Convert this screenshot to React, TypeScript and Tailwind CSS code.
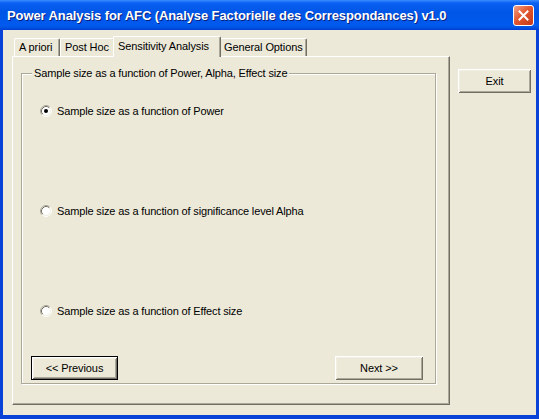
import React from 'react';

const font = "font-['Tahoma','Liberation_Sans',sans-serif]";
const raised =
  'shadow-[inset_1px_1px_0_#fff,inset_-1px_-1px_0_#716f64,inset_2px_2px_0_#f1efe2,inset_-2px_-2px_0_#aca899]';

function Radio({ checked }: { checked?: boolean }) {
  return (
    <svg width="12" height="12" viewBox="0 0 12 12" className="shrink-0">
      <circle cx="6" cy="6" r="5" fill="#fff" />
      <path d="M2.11 9.89 A5.5 5.5 0 0 1 9.89 2.11" fill="none" stroke="#aca899" />
      <path d="M9.89 2.11 A5.5 5.5 0 0 1 2.11 9.89" fill="none" stroke="#fff" />
      <path d="M2.82 9.18 A4.5 4.5 0 0 1 9.18 2.82" fill="none" stroke="#716f64" />
      <path d="M9.18 2.82 A4.5 4.5 0 0 1 2.82 9.18" fill="none" stroke="#f1efe2" />
      {checked && <circle cx="6" cy="6" r="2" fill="#000" />}
    </svg>
  );
}

function Button({ label, isDefault, className }: { label: string; isDefault?: boolean; className: string }) {
  return (
    <div className={`${className} ${isDefault ? 'border border-black' : ''} bg-[#ece9d8]`}>
      <div className={`h-full w-full flex items-center justify-center text-[11px] tracking-[-0.1px] text-black ${raised}`}>
        {label}
      </div>
    </div>
  );
}

function Tab({ label, width, selected }: { label: string; width: string; selected?: boolean }) {
  return (
    <div
      className={`${width} ${
        selected
          ? 'h-[21px] -mb-px -mx-[2px] relative z-10 pt-[2px]'
          : 'h-[18px] pt-[1px]'
      } bg-[#ece9d8] border-t border-l border-white border-r border-r-[#716f64] rounded-t-[2px] shadow-[inset_-1px_0_0_#aca899] pl-[4px] text-[11px] tracking-[-0.1px] leading-[15px] whitespace-nowrap`}
    >
      {label}
    </div>
  );
}

export default function App() {
  return (
    <div className={`w-[539px] h-[419px] flex flex-col bg-[#0842d6] ${font} text-black`}>
      <div className="h-[30px] shrink-0 flex items-center justify-between pl-[7px] pr-[5px] bg-[linear-gradient(to_bottom,#3a8cff_0%,#0a60f2_10%,#0056e6_40%,#005aee_85%,#0052e0_92%,#003dd7_100%)]">
        <span className="text-white font-bold text-[13px] font-['Trebuchet_MS','Liberation_Sans',sans-serif] [text-shadow:1px_1px_0_#0a1f7a] tracking-[-0.1px] mt-[1px]">
          Power Analysis for AFC (Analyse Factorielle des Correspondances) v1.0
        </span>
        <div className="w-[21px] h-[21px] rounded-[3px] border border-white bg-[linear-gradient(135deg,#f0a38a_0%,#e3582f_45%,#c4391a_100%)] flex items-center justify-center">
          <svg width="11" height="11" viewBox="0 0 11 11">
            <path d="M1.5 1.5 L9.5 9.5 M9.5 1.5 L1.5 9.5" stroke="#fff" strokeWidth="2" strokeLinecap="square" />
          </svg>
        </div>
      </div>
      <div className="flex-1 mx-[3px] mb-[4px] bg-[#ece9d8] flex">
        <div className="ml-[9px] mt-[6px] w-[438px] flex flex-col">
          <div className="h-[20px] flex items-end pl-[2px]">
            <Tab label="A priori" width="w-[46px]" />
            <Tab label="Post Hoc" width="w-[55px]" />
            <Tab label="Sensitivity Analysis" width="w-[108px]" selected />
            <Tab label="General Options" width="w-[88px]" />
          </div>
          <div className="h-[349px] border-t border-l border-white border-r border-b border-r-[#716f64] border-b-[#716f64] shadow-[inset_-1px_-1px_0_#aca899] pl-[8px] pr-[13px] pt-[16px]">
            <div className="relative h-[311px] border border-[#aca899] shadow-[1px_1px_0_#fff,inset_1px_1px_0_#fff] flex flex-col text-[11px] tracking-[-0.15px]">
              <span className="absolute left-[10px] -top-[8px] px-[2px] bg-[#ece9d8] leading-[14px]">
                Sample size as a function of Power, Alpha, Effect size
              </span>
              <div className="flex flex-col gap-[88px] pt-[31px] pl-[18px]">
                <div className="flex items-center gap-[5px] h-[12px]">
                  <Radio checked />
                  <span>Sample size as a function of Power</span>
                </div>
                <div className="flex items-center gap-[5px] h-[12px]">
                  <Radio />
                  <span>Sample size as a function of significance level Alpha</span>
                </div>
                <div className="flex items-center gap-[5px] h-[12px]">
                  <Radio />
                  <span>Sample size as a function of Effect size</span>
                </div>
              </div>
              <div className="mt-auto mb-[3px] flex justify-between pl-[9px] pr-[12px]">
                <Button label="<< Previous" isDefault className="w-[87px] h-[24px]" />
                <Button label="Next >>" className="w-[88px] h-[24px]" />
              </div>
            </div>
          </div>
        </div>
        <div className="ml-[8px] mt-[39px]">
          <Button label="Exit" className="w-[73px] h-[24px]" />
        </div>
      </div>
    </div>
  );
}
